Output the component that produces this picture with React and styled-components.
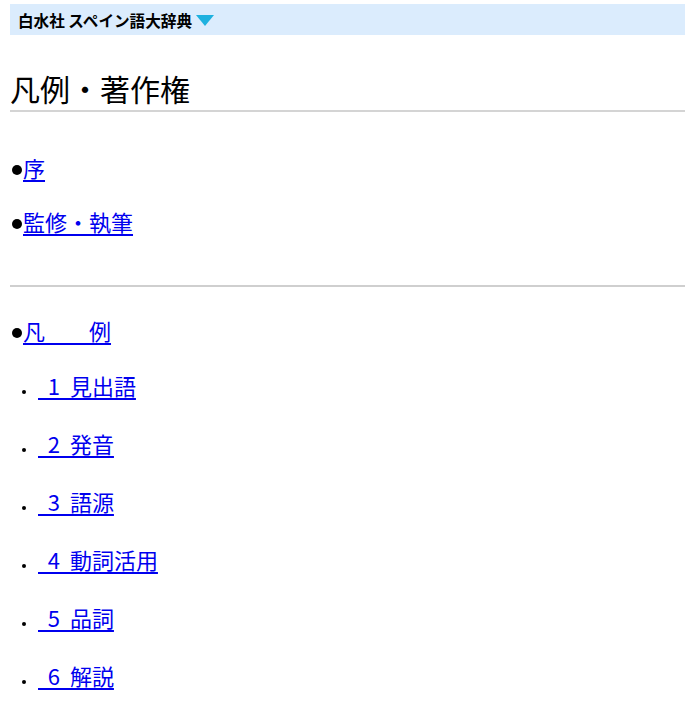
import React from 'react';
import styled, { createGlobalStyle } from 'styled-components';

const GlobalStyle = createGlobalStyle`
  body {
    margin: 0;
    background: #ffffff;
    font-family: "Noto Sans CJK JP", "Noto Sans", sans-serif;
    color: #000000;
  }
`;

const Page = styled.div`
  padding: 4px 5px 0 10px;
`;

const DictBar = styled.div`
  display: flex;
  align-items: center;
  height: 31px;
  padding-left: 8px;
  background-color: #dbecfd;
  font-size: 15.6px;
  font-weight: bold;
`;

const DropArrow = styled.svg`
  margin-left: 4px;
  margin-top: 1px;
`;

const Title = styled.h1`
  margin: 33px 0 0;
  padding-bottom: 2px;
  font-size: 30px;
  font-weight: normal;
  line-height: 40px;
  border-bottom: 2px solid #d4d4d4;
`;

const Section = styled.div`
  padding: ${(p) => p.$top}px 0 ${(p) => p.$bottom}px;
  border-bottom: ${(p) => (p.$rule ? '2px solid #cfcfcf' : 'none')};
`;

const Entry = styled.div`
  display: flex;
  align-items: center;
  margin-top: 24px;
  padding-left: 2px;
  font-size: 22px;
  line-height: 30px;
`;

const BigDot = styled.span`
  display: inline-block;
  width: 10px;
  height: 10px;
  margin: 6px 1px 0 0;
  border-radius: 50%;
  background: #000000;
`;

const SubList = styled.div`
  margin-top: -3px;
`;

const SubEntry = styled.div`
  margin-top: 28px;
  padding-left: 12px;
  font-size: 22px;
  line-height: 30px;
`;

const SmallDot = styled.span`
  display: inline-block;
  width: 4px;
  height: 4px;
  margin: 0 12px 1px 0;
  border-radius: 50%;
  background: #000000;
`;

const Link = styled.a`
  color: #0000ee;
  text-decoration: underline;
  text-underline-offset: 3px;
`;

const chapters = ['1\u00a0\u00a0見出語', '2\u00a0\u00a0発音', '3\u00a0\u00a0語源', '4\u00a0\u00a0動詞活用', '5\u00a0\u00a0品詞', '6\u00a0\u00a0解説'];

export default function App() {
  return (
    <Page>
      <GlobalStyle />
      <DictBar>
        白水社 スペイン語大辞典
        <DropArrow width="18" height="11" viewBox="0 0 18 11">
          <polygon points="0,0 18,0 9,11" fill="#1eb1df" />
        </DropArrow>
      </DictBar>
      <Title>凡例・著作権</Title>

      <Section $top={16} $bottom={49} $rule>
        <Entry>
          <BigDot />
          <Link href="#">序</Link>
        </Entry>
        <Entry>
          <BigDot />
          <Link href="#">監修・執筆</Link>
        </Entry>
      </Section>

      <Section $top={4} $bottom={20}>
        <Entry>
          <BigDot />
          <Link href="#">凡　　例</Link>
        </Entry>
        <SubList>
          {chapters.map((c) => (
            <SubEntry key={c}>
              <SmallDot />
              <Link href="#">{'\u00a0\u00a0' + c}</Link>
            </SubEntry>
          ))}
        </SubList>
      </Section>
    </Page>
  );
}
